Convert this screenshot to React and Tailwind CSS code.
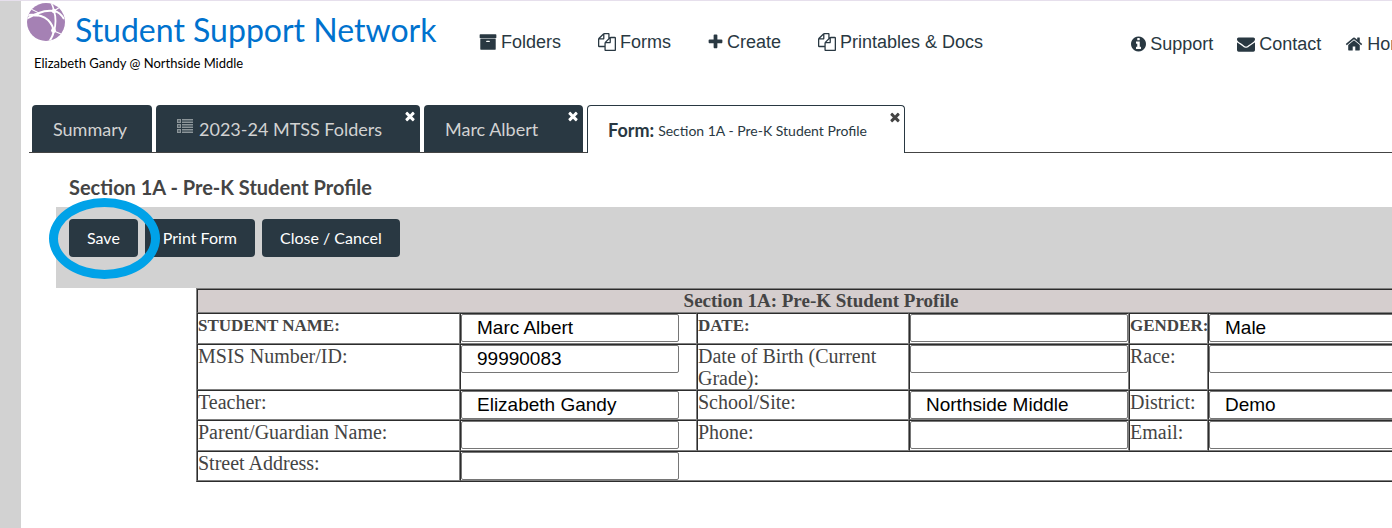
const ICONS = {
  archive: 'M1088 832q0-26-19-45t-45-19h-256q-26 0-45 19t-19 45 19 45 45 19h256q26 0 45-19t19-45zm576-192v960q0 26-19 45t-45 19h-1408q-26 0-45-19t-19-45v-960q0-26 19-45t45-19h1408q26 0 45 19t19 45zm64-448v256q0 26-19 45t-45 19h-1536q-26 0-45-19t-19-45v-256q0-26 19-45t45-19h1536q26 0 45 19t19 45z',
  files: 'M1696 384q40 0 68 28t28 68v1216q0 40-28 68t-68 28h-960q-40 0-68-28t-28-68v-288h-544q-40 0-68-28t-28-68v-672q0-40 20-88t48-76l408-408q28-28 76-48t88-20h416q40 0 68 28t28 68v328q68-40 128-40h416zm-544 213l-299 299h299v-299zm-640-384l-299 299h299v-299zm196 647l316-316v-416h-384v416q0 40-28 68t-68 28h-416v640h512v-256q0-40 20-88t48-76zm956 804v-1152h-384v416q0 40-28 68t-68 28h-416v640h896z',
  plus: 'M1600 736v192q0 40-28 68t-68 28h-416v416q0 40-28 68t-68 28h-192q-40 0-68-28t-28-68v-416h-416q-40 0-68-28t-28-68v-192q0-40 28-68t68-28h416v-416q0-40 28-68t68-28h192q40 0 68 28t28 68v416h416q40 0 68 28t28 68z',
  info: 'M1152 1376v-160q0-14-9-23t-23-9h-96v-512q0-14-9-23t-23-9h-320q-14 0-23 9t-9 23v160q0 14 9 23t23 9h96v320h-96q-14 0-23 9t-9 23v160q0 14 9 23t23 9h448q14 0 23-9t9-23zm-128-896v-160q0-14-9-23t-23-9h-192q-14 0-23 9t-9 23v160q0 14 9 23t23 9h192q14 0 23-9t9-23zm640 416q0 209-103 385.5t-279.5 279.5-385.5 103-385.5-103-279.5-279.5-103-385.5 103-385.5 279.5-279.5 385.5-103 385.5 103 279.5 279.5 103 385.5z',
  envelope: 'M1792 710v794q0 66-47 113t-113 47h-1472q-66 0-113-47t-47-113v-794q44 49 101 87 362 246 497 345 57 42 92.5 65.5t94.5 48 110 24.5h2q51 0 110-24.5t94.5-48 92.5-65.5q170-123 498-345 57-39 100-87zm0-294q0 79-49 151t-122 123q-376 261-468 325-10 7-42.5 31t-54 38.5-52 32.5-57.5 27-50 9h-2q-23 0-50-9t-57.5-27-52-32.5-54-38.5-42.5-31q-91-64-262-182.5t-205-142.5q-62-42-117-115.5t-55-136.5q0-78 41.5-130t118.5-52h1472q65 0 112.5 47t47.5 113z',
  home: 'M1472 992v480q0 26-19 45t-45 19h-384v-384h-256v384h-384q-26 0-45-19t-19-45v-480q0-1 .5-3t.5-3l575-474 575 474q1 2 1 6zm223-69l-62 74q-8 9-21 11h-3q-13 0-21-7l-692-577-692 577q-12 8-24 7-13-2-21-11l-62-74q-8-10-7-23.5t11-21.5l719-599q32-26 76-26t76 26l244 204v-195q0-14 9-23t23-9h192q14 0 23 9t9 23v408l219 182q10 8 11 21.5t-7 23.5z',
  times: 'M1490 1322q0 40-28 68l-136 136q-28 28-68 28t-68-28l-294-294-294 294q-28 28-68 28t-68-28l-136-136q-28-28-28-68t28-68l294-294-294-294q-28-28-28-68t28-68l136-136q28-28 68-28t68 28l294 294 294-294q28-28 68-28t68 28l136 136q28 28 28 68t-28 68l-294 294 294 294q28 28 28 68z',
}

const Icon = ({ name, viewBox = '0 0 1792 1792', className = 'size-[18px]' }) => (
  <svg viewBox={viewBox} fill="currentColor" aria-hidden="true" className={`shrink-0 ${className}`}>
    <path d={ICONS[name]} />
  </svg>
)

const Logo = () => (
  <svg viewBox="0 0 38 38" aria-hidden="true" className="size-[38px] shrink-0">
    <defs>
      <clipPath id="globe">
        <circle cx="19" cy="19" r="19" />
      </clipPath>
    </defs>
    <g clipPath="url(#globe)">
      <rect width="38" height="38" fill="#a581b4" />
      <g fill="none" stroke="#fff">
        <path d="M-1 16 Q6 12 12 10 Q19 7 27 8 Q33 9 37 16" strokeWidth="2" />
        <path d="M1 12 Q14 11 21 17 Q26 22 27 29" strokeWidth="2" />
        <path d="M12 10 L4 6" strokeWidth="1" />
        <path d="M24 -1 Q26 3 27 8" strokeWidth="1.6" />
        <path d="M27 8 L33 4" strokeWidth="1.2" />
        <path d="M27 8 Q30 17 27 29" strokeWidth="1.8" />
        <path d="M27 28 Q26 33 22 39" strokeWidth="2" />
        <path d="M27 28 L34 31" strokeWidth="1.2" />
      </g>
      <g fill="#fff">
        <ellipse cx="9" cy="12" rx="3" ry="1.6" />
        <circle cx="27" cy="8" r="2.2" />
        <circle cx="26.500" cy="27.500" r="2.4" />
      </g>
    </g>
  </svg>
)

const ListIcon = () => (
  <svg viewBox="0 0 16 15" fill="none" stroke="#8c9599" aria-hidden="true" className="mb-[6px] h-[15px] w-4 shrink-0">
    {[0, 5, 10].map((y) => (
      <g key={y}>
        <rect x="0.5" y={y + 0.5} width="3" height="3" fill="#5b676e" />
        <path d={`M5 ${y + 0.5}h11M5 ${y + 3.5}h11`} />
        <path d={`M5 ${y + 2}h11`} strokeOpacity="0.5" strokeWidth="2" />
      </g>
    ))}
  </svg>
)

const NavLink = ({ icon, narrow = false, children }) => (
  <a href="#" className="flex items-center gap-1 whitespace-nowrap text-[18px] leading-6">
    {narrow ? <Icon name={icon} viewBox="128 0 1536 1792" className="h-[18px] w-[15px]" /> : <Icon name={icon} />}
    {children}
  </a>
)

const Tab = ({ className, closable = true, active = false, children }) => (
  <div
    className={`relative shrink-0 rounded-t-[4px] ${className} ${active ? '-mb-px h-12 border border-b-0 border-[#293842] bg-white text-[#293842]' : 'h-[47px] bg-[#293842] text-[#d2d2d2]'}`}
  >
    <button
      type="button"
      className={`flex h-full items-center whitespace-nowrap pt-[2px] text-[18px] ${active ? 'gap-1 pl-5' : 'gap-[6px] pl-[21px]'}`}
    >
      {children}
    </button>
    {closable && (
      <button
        type="button"
        aria-label="Close tab"
        className={`absolute top-1 ${active ? 'right-[2px] text-[#444]' : 'right-[3px] text-white'}`}
      >
        <Icon name="times" className="size-[14px]" />
      </button>
    )}
  </div>
)

const ActionButton = ({ children }) => (
  <button type="button" className="h-[38px] whitespace-nowrap rounded-[4px] bg-[#293842] px-[18px] text-[16px] text-white">
    {children}
  </button>
)

const rows = [
  { height: 'h-[31px]', bold: true, fields: [['STUDENT NAME:', 'Marc Albert'], ['DATE:', ''], ['GENDER:', 'Male']] },
  { height: 'h-[46px]', fields: [['MSIS Number/ID:', '99990083'], ['Date of Birth (Current Grade):', ''], ['Race:', '']] },
  { height: 'h-[30px]', fields: [['Teacher:', 'Elizabeth Gandy'], ['School/Site:', 'Northside Middle'], ['District:', 'Demo']] },
  { height: 'h-[31px]', fields: [['Parent/Guardian Name:', ''], ['Phone:', ''], ['Email:', '']] },
  { height: 'h-[30px]', fields: [['Street Address:', '']] },
]

const cell = 'border border-t-[#2c2c2c] border-l-[#2c2c2c] border-r-[#808080] border-b-[#808080] p-0 align-top'

const FormTable = () => (
  <table className="w-[1250px] table-fixed border-separate border-spacing-0 border border-t-[#808080] border-l-[#808080] border-r-[#2c2c2c] border-b-[#2c2c2c] font-['Liberation_Serif',serif] text-[#444]">
    <colgroup>
      <col className="w-[263px]" />
      <col className="w-[237px]" />
      <col className="w-[212px]" />
      <col className="w-[220px]" />
      <col className="w-[79px]" />
      <col />
    </colgroup>
    <thead>
      <tr className="h-6">
        <th colSpan={6} className={`${cell} bg-[#d5cece] text-[19px] leading-[22px] font-bold`}>
          Section 1A: Pre-K Student Profile
        </th>
      </tr>
    </thead>
    <tbody>
      {rows.map((row) => (
        <tr key={row.fields[0][0]} className={row.height}>
          {row.fields.map(([label, value]) => [
            <td key={label} className={cell}>
              <label
                htmlFor={label}
                className={`block ${row.bold ? 'text-[17px] leading-6 font-bold' : 'text-[20px] leading-[22px]'}`}
              >
                {label}
              </label>
            </td>,
            <td key={`${label}-value`} colSpan={row.fields.length === 1 ? 5 : 1} className={cell}>
              <input
                id={label}
                type="text"
                defaultValue={value}
                className="block h-7 w-[218px] rounded-[2px] border border-[#767676] bg-white px-[15px] font-['Liberation_Sans',sans-serif] text-[19px] text-black"
              />
            </td>,
          ])}
        </tr>
      ))}
    </tbody>
  </table>
)

export default function App() {
  return (
    <div className="flex min-h-screen overflow-hidden border-t border-[#e6dfec] bg-white font-['Lato',sans-serif]">
      <aside className="w-[21px] shrink-0 bg-[#d2d2d2]" />
      <main className="min-w-0 flex-1 overflow-hidden">
        <header className="flex h-[104px] text-[#293842]">
          <div className="w-[458px] shrink-0 pl-[6px] pt-[2px]">
            <div className="flex gap-[10px]">
              <Logo />
              <h1 className="pt-[7px] text-[32px] leading-10 whitespace-nowrap text-[#0072ce]">Student Support Network</h1>
            </div>
            <p className="pl-[7px] pt-[3px] text-[13px] leading-5 text-black">Elizabeth Gandy @ Northside Middle</p>
          </div>
          <nav className="flex shrink-0 items-start gap-[37px] pt-[29px] font-['Liberation_Sans',sans-serif]">
            <NavLink icon="archive">Folders</NavLink>
            <NavLink icon="files">Forms</NavLink>
            <NavLink icon="plus" narrow>Create</NavLink>
            <NavLink icon="files">Printables &amp; Docs</NavLink>
          </nav>
          <nav className="ml-[148px] flex shrink-0 items-start gap-6 pt-[31px] font-['Liberation_Sans',sans-serif]">
            <NavLink icon="info" narrow>Support</NavLink>
            <NavLink icon="envelope">Contact</NavLink>
            <NavLink icon="home">Home</NavLink>
          </nav>
        </header>

        <div className="ml-2 flex items-start gap-1 border-b border-[#444] pl-[3px]">
          <Tab className="w-[120px]" closable={false}>Summary</Tab>
          <Tab className="w-[264px]">
            <ListIcon />
            2023-24 MTSS Folders
          </Tab>
          <Tab className="w-[159px]">Marc Albert</Tab>
          <Tab className="w-[318px]" active>
            <b>Form:</b>
            <span className="text-[14px]">Section 1A - Pre-K Student Profile</span>
          </Tab>
        </div>

        <section className="relative ml-[35px] pt-[20px]">
          <h2 className="h-[34px] pl-[13px] text-[20px] leading-7 font-bold text-[#444]">Section 1A - Pre-K Student Profile</h2>
          <div className="flex h-[81px] gap-[7px] bg-[#d2d2d2] pl-[13px] pt-3">
            <ActionButton>Save</ActionButton>
            <ActionButton>Print Form</ActionButton>
            <ActionButton>Close / Cancel</ActionButton>
          </div>
          {/* highlight ring around Save */}
          <div className="pointer-events-none absolute -left-[7px] top-[45px] h-[81px] w-[111px] rounded-[50%] border-[9px] border-[#00a2e8]" />
          <div className="ml-[140px]">
            <FormTable />
          </div>
        </section>
      </main>
    </div>
  )
}
